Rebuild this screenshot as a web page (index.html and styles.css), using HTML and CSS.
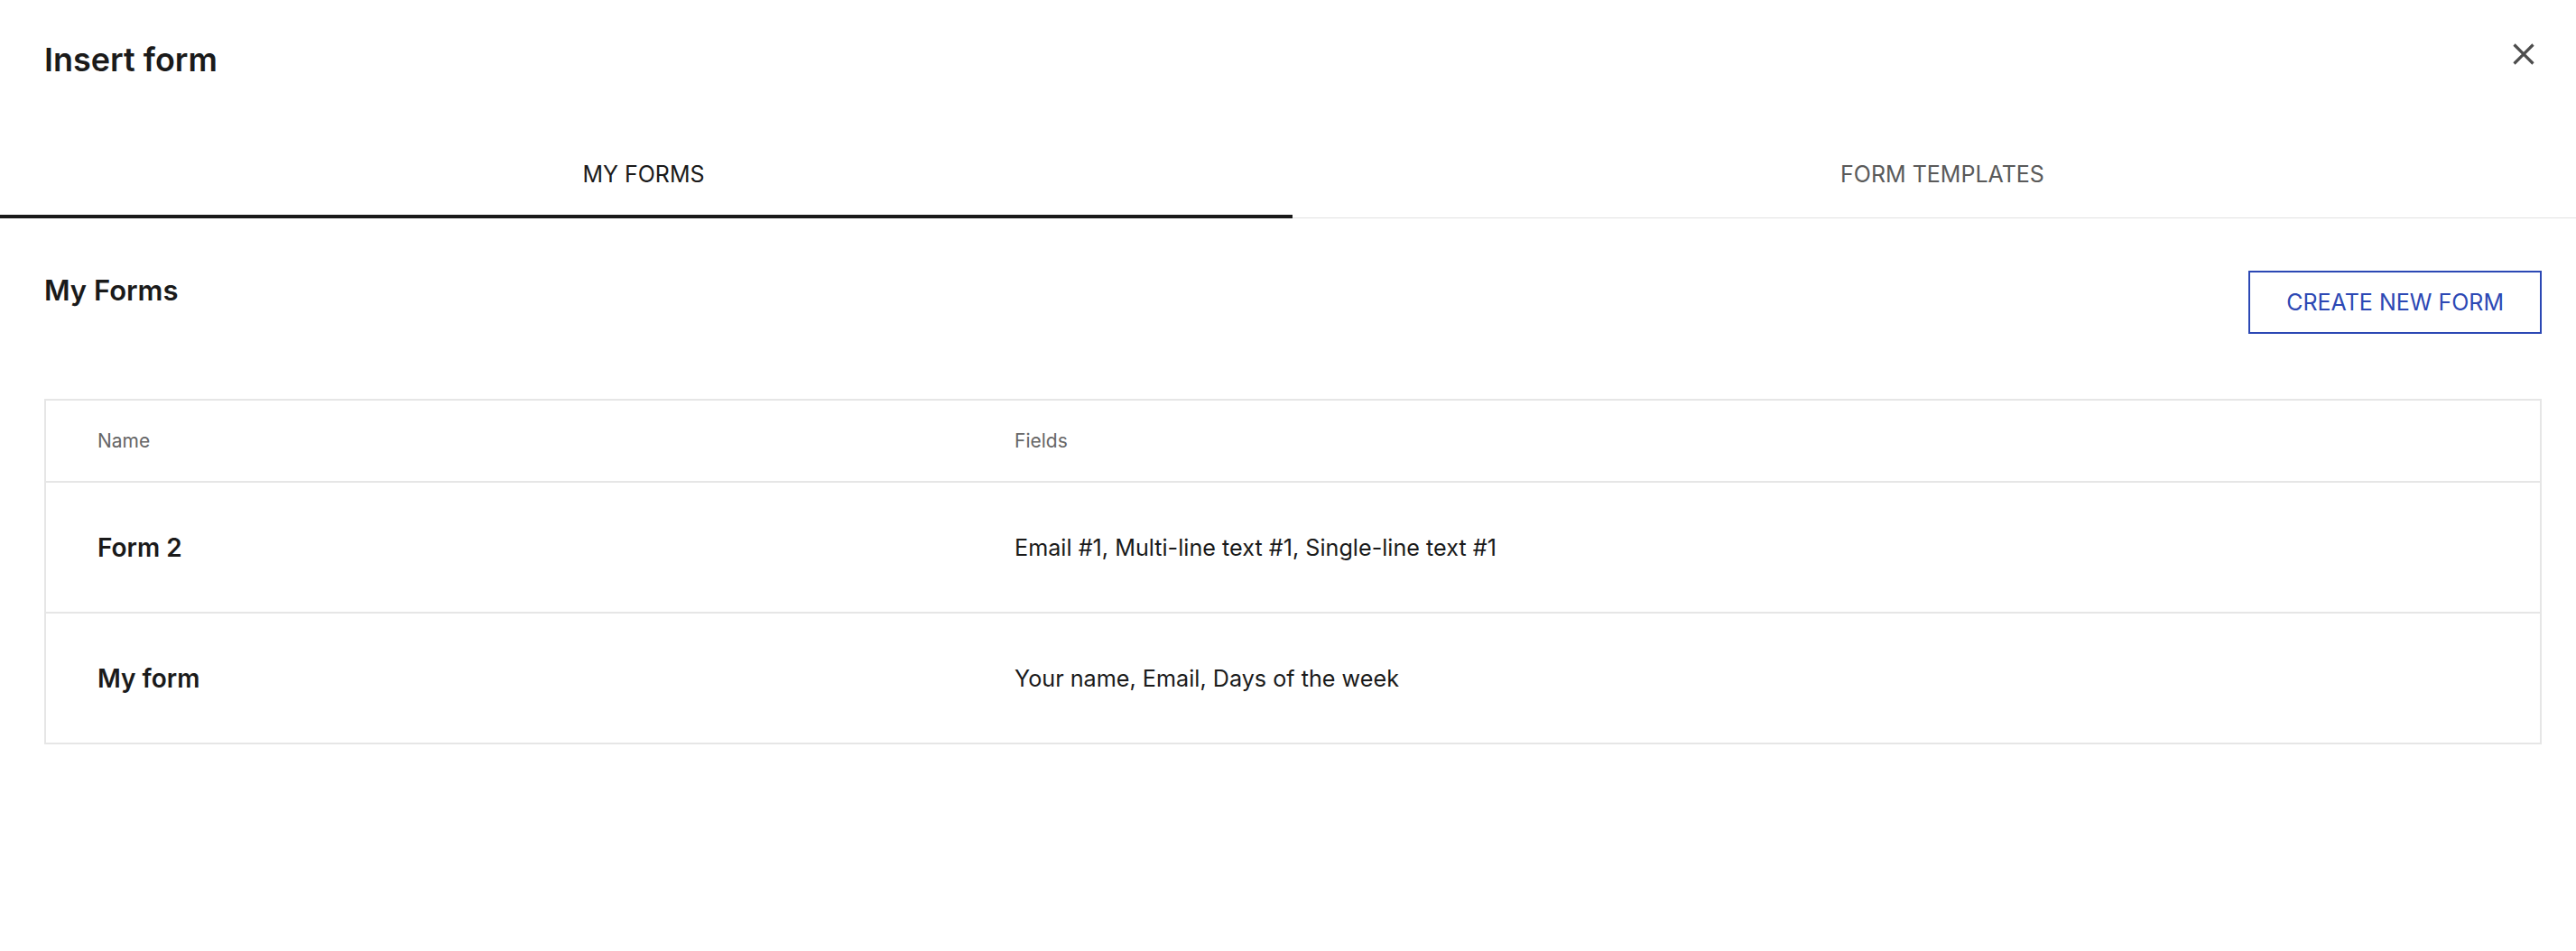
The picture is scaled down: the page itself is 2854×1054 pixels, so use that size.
FILE: index.html
```html
<!DOCTYPE html>
<html lang="en">
<head>
<meta charset="utf-8">
<title>Insert form</title>
<link rel="stylesheet" href="styles.css">
</head>
<body>
<div class="dialog">
  <header class="dialog-header">
    <h1 class="dialog-title">Insert form</h1>
    <button class="close-btn" aria-label="Close">
      <svg width="24" height="24" viewBox="0 0 24 24"><path d="M1.5 1.5 L22.5 22.5 M22.5 1.5 L1.5 22.5" stroke="#4d4d4d" stroke-width="3.2" fill="none"/></svg>
    </button>
  </header>
  <nav class="tabs">
    <div class="tab active">MY FORMS</div>
    <div class="tab">FORM TEMPLATES</div>
  </nav>
  <section class="content">
    <div class="section-head">
      <h2 class="section-title">My Forms</h2>
      <button class="create-btn">CREATE NEW FORM</button>
    </div>
    <div class="table">
      <div class="row head">
        <div class="cell">Name</div>
        <div class="cell">Fields</div>
      </div>
      <div class="row">
        <div class="cell name">Form 2</div>
        <div class="cell">Email #1, Multi-line text #1, Single-line text #1</div>
      </div>
      <div class="row">
        <div class="cell name">My form</div>
        <div class="cell">Your name, Email, Days of the week</div>
      </div>
    </div>
  </section>
</div>
</body>
</html>
```
FILE: styles.css
```css
* { box-sizing: border-box; }
html, body { margin: 0; padding: 0; background: #fff; overflow: hidden; }
body {
  font-family: Inter, "Noto Sans", sans-serif;
  color: #1a1a1a;
}
.dialog { width: 2854px; }
.dialog-header {
  display: flex;
  justify-content: space-between;
  align-items: flex-start;
  padding: 44px 46px 56px 49px;
}
.dialog-title {
  margin: 0;
  font-size: 36px;
  line-height: 44px;
  font-weight: 600;
}
.close-btn {
  border: 0;
  background: none;
  padding: 0;
  margin-top: 4px;
  width: 24px;
  height: 24px;
  display: block;
}
.close-btn svg { display: block; }
.tabs {
  display: flex;
  width: 2864px;
  border-bottom: 1px solid #e2e2e2;
}
.tab {
  flex: 0 0 1432px;
  text-align: center;
  font-size: 25px;
  line-height: 32px;
  padding: 33px 0 29px;
  color: #5a5a5a;
  border-bottom: 4px solid transparent;
  margin-bottom: -1px;
}
.tab:first-child { padding-right: 6px; }
.tab + .tab { padding-left: 8px; }
.tab.active {
  color: #1a1a1a;
  border-bottom-color: #1a1a1a;
}
.content { padding: 57px 38px 0 49px; }
.section-head {
  display: flex;
  justify-content: space-between;
  align-items: flex-start;
}
.section-title {
  margin: 4px 0 0;
  font-size: 31px;
  line-height: 38px;
  font-weight: 600;
}
.create-btn {
  font-family: Inter, "Noto Sans", sans-serif;
  font-size: 25px;
  line-height: 30px;
  padding: 18px 40px;
  margin-top: 1px;
  border: 2px solid #2c48b4;
  color: #2c48b4;
  background: #fff;
}
.table {
  margin-top: 72px;
  border: 2px solid #e6e6e6;
}
.row {
  display: grid;
  grid-template-columns: 1016px 1fr;
  align-items: center;
  height: 145px;
  border-top: 2px solid #e6e6e6;
}
.row.head {
  height: 89px;
  border-top: 0;
}
.cell {
  padding-left: 57px;
  font-size: 25.2px;
  line-height: 32px;
}
.row.head .cell {
  font-size: 21px;
  line-height: 26px;
  color: #666;
}
.cell.name {
  font-size: 28px;
  font-weight: 600;
}
```
